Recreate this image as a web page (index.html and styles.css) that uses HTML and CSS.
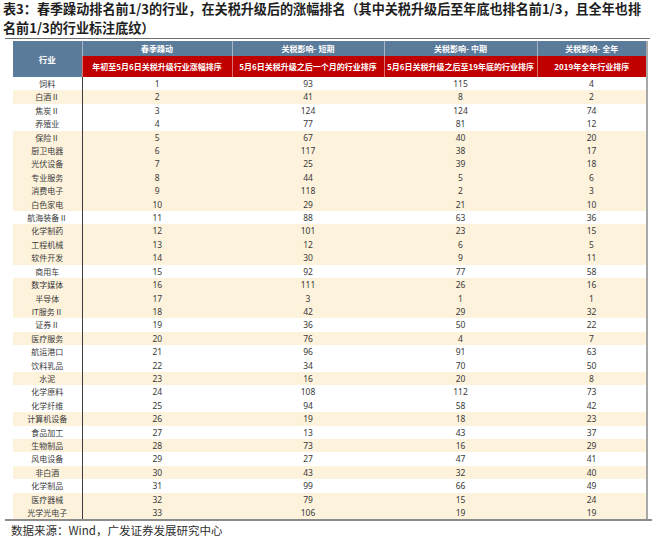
FILE: index.html
```html
<!DOCTYPE html>
<html lang="zh-CN">
<head>
<meta charset="utf-8">
<title>表3</title>
<link rel="stylesheet" href="styles.css">
</head>
<body>
<div class="page">
  <h1 class="title"><span class="tl">表3：春季躁动排名前1/3的行业，在关税升级后的涨幅排名（其中关税升级后至年底也排名前1/3，且全年也排</span><span class="tl">名前1/3的行业标注底纹）</span></h1>
  <div class="rule"></div>
  <div class="table-wrap">
    <table class="rank">
      <colgroup>
        <col class="c1"><col class="c2"><col class="c3"><col class="c4"><col class="c5">
      </colgroup>
      <thead>
        <tr class="h-top">
          <th rowspan="2" class="h-ind">行业</th>
          <th>春季躁动</th>
          <th>关税影响- 短期</th>
          <th>关税影响- 中期</th>
          <th>关税影响- 全年</th>
        </tr>
        <tr class="h-sub">
          <th>年初至5月6日关税升级行业涨幅排序</th>
          <th>5月6日关税升级之后一个月的行业排序</th>
          <th>5月6日关税升级之后至19年底的行业排序</th>
          <th>2019年全年行业排序</th>
        </tr>
      </thead>
      <tbody>
        <tr><td>饲料</td><td>1</td><td>93</td><td>115</td><td>4</td></tr>
        <tr class="hl"><td>白酒Ⅱ</td><td>2</td><td>41</td><td>8</td><td>2</td></tr>
        <tr><td>焦炭Ⅱ</td><td>3</td><td>124</td><td>124</td><td>74</td></tr>
        <tr><td>养殖业</td><td>4</td><td>77</td><td>81</td><td>12</td></tr>
        <tr class="hl"><td>保险Ⅱ</td><td>5</td><td>67</td><td>40</td><td>20</td></tr>
        <tr class="hl"><td>厨卫电器</td><td>6</td><td>117</td><td>38</td><td>17</td></tr>
        <tr class="hl"><td>光伏设备</td><td>7</td><td>25</td><td>39</td><td>18</td></tr>
        <tr class="hl"><td>专业服务</td><td>8</td><td>44</td><td>5</td><td>6</td></tr>
        <tr class="hl"><td>消费电子</td><td>9</td><td>118</td><td>2</td><td>3</td></tr>
        <tr class="hl"><td>白色家电</td><td>10</td><td>29</td><td>21</td><td>10</td></tr>
        <tr><td>航海装备Ⅱ</td><td>11</td><td>88</td><td>63</td><td>36</td></tr>
        <tr class="hl"><td>化学制药</td><td>12</td><td>101</td><td>23</td><td>15</td></tr>
        <tr class="hl"><td>工程机械</td><td>13</td><td>12</td><td>6</td><td>5</td></tr>
        <tr class="hl"><td>软件开发</td><td>14</td><td>30</td><td>9</td><td>11</td></tr>
        <tr><td>商用车</td><td>15</td><td>92</td><td>77</td><td>58</td></tr>
        <tr class="hl"><td>数字媒体</td><td>16</td><td>111</td><td>26</td><td>16</td></tr>
        <tr class="hl"><td>半导体</td><td>17</td><td>3</td><td>1</td><td>1</td></tr>
        <tr class="hl"><td>IT服务Ⅱ</td><td>18</td><td>42</td><td>29</td><td>32</td></tr>
        <tr><td>证券Ⅱ</td><td>19</td><td>36</td><td>50</td><td>22</td></tr>
        <tr class="hl"><td>医疗服务</td><td>20</td><td>76</td><td>4</td><td>7</td></tr>
        <tr><td>航运港口</td><td>21</td><td>96</td><td>91</td><td>63</td></tr>
        <tr><td>饮料乳品</td><td>22</td><td>34</td><td>70</td><td>50</td></tr>
        <tr class="hl"><td>水泥</td><td>23</td><td>16</td><td>20</td><td>8</td></tr>
        <tr><td>化学原料</td><td>24</td><td>108</td><td>112</td><td>73</td></tr>
        <tr><td>化学纤维</td><td>25</td><td>94</td><td>58</td><td>42</td></tr>
        <tr class="hl"><td>计算机设备</td><td>26</td><td>19</td><td>18</td><td>23</td></tr>
        <tr><td>食品加工</td><td>27</td><td>13</td><td>43</td><td>37</td></tr>
        <tr class="hl"><td>生物制品</td><td>28</td><td>73</td><td>16</td><td>29</td></tr>
        <tr><td>风电设备</td><td>29</td><td>27</td><td>47</td><td>41</td></tr>
        <tr class="hl"><td>非白酒</td><td>30</td><td>43</td><td>32</td><td>40</td></tr>
        <tr><td>化学制品</td><td>31</td><td>99</td><td>66</td><td>49</td></tr>
        <tr class="hl"><td>医疗器械</td><td>32</td><td>79</td><td>15</td><td>24</td></tr>
        <tr class="hl"><td>光学光电子</td><td>33</td><td>106</td><td>19</td><td>19</td></tr>
      </tbody>
    </table>
  </div>
  <div class="rule-bottom"></div>
  <p class="source">数据来源：Wind，广发证券发展研究中心</p>
</div>
</body>
</html>
```

FILE: styles.css
```css
* { box-sizing: border-box; }
html, body { margin: 0; padding: 0; background: #ffffff; }
.page {
  width: 660px;
  font-family: "Noto Sans", "Noto Sans CJK SC", sans-serif;
}
.title {
  margin: 0 0 0 3px;
  display: flex;
  flex-direction: column;
  font-family: "Noto Sans CJK SC", sans-serif;
  font-weight: 700;
  font-size: 13.1px;
  color: #1e1e1e;
  white-space: nowrap;
}
.tl {
  display: block;
  height: 18.5px;
  line-height: 18.5px;
  overflow: visible;
}
.rule {
  margin: 1px 10px 0 5px;
  height: 1px;
  background: #6e6e6e;
}
.table-wrap {
  margin: 2px 0 0 13px;
  width: 635px;
  border-right: 2px solid #a8a8a8;
}
.rank {
  width: 633px;
  table-layout: fixed;
  border-collapse: collapse;
  border-spacing: 0;
}
.c1 { width: 69px; }
.c2 { width: 150px; }
.c3 { width: 152px; }
.c4 { width: 153px; }
.c5 { width: 109px; }
.rank th {
  padding: 0;
  color: #ffffff;
  font-family: "Noto Sans CJK SC", sans-serif;
  font-weight: 700;
  font-size: 8px;
  text-align: center;
  white-space: nowrap;
  border-left: 1px solid rgba(255, 255, 255, 0.45);
}
.rank th.h-ind { border-left: none; font-size: 8.5px; background: #5b7b9b; }
.h-top th { background: #5b7b9b; height: 15px; line-height: 15px; }
.h-sub th { background: #c00000; height: 21px; line-height: 21px; }
.rank td {
  padding: 0;
  height: 13.4px;
  line-height: 13.4px;
  font-size: 8.5px;
  color: #3a3a3a;
  text-align: center;
  white-space: nowrap;
}
.rank td:first-child {
  font-family: "Noto Sans CJK SC", sans-serif;
  font-size: 8px;
  border-right: 1px solid #3c3c3c;
}
.rank tr.hl td { background: #fdf2dc; }
.rule-bottom {
  margin: 0 8px 0 5px;
  height: 2px;
  background: #8c8c8c;
}
.source {
  margin: 2px 0 0 11px;
  font-family: "Noto Sans CJK SC", sans-serif;
  font-size: 11.5px;
  line-height: 15px;
  color: #2e2e2e;
}
```
